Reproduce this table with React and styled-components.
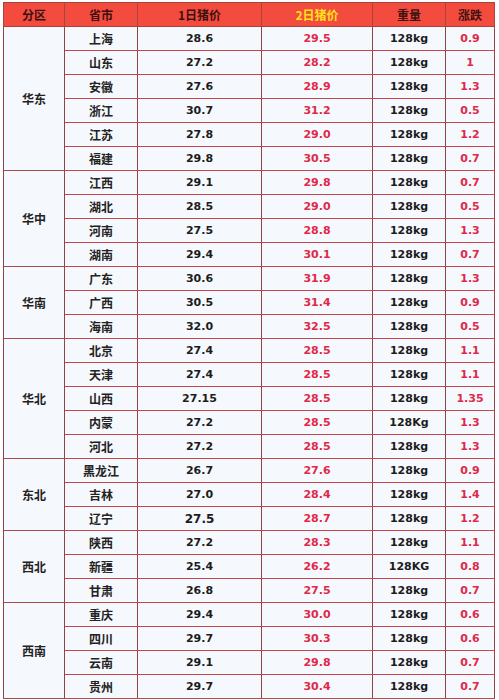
import styled, { createGlobalStyle } from "styled-components";

const GlobalStyle = createGlobalStyle`
  html, body {
    margin: 0;
    padding: 0;
    background: #ffffff;
  }
`;

const regions = [
  {
    name: "华东",
    rows: [
      ["上海", "28.6", "29.5", "128kg", "0.9"],
      ["山东", "27.2", "28.2", "128kg", "1"],
      ["安徽", "27.6", "28.9", "128kg", "1.3"],
      ["浙江", "30.7", "31.2", "128kg", "0.5"],
      ["江苏", "27.8", "29.0", "128kg", "1.2"],
      ["福建", "29.8", "30.5", "128kg", "0.7"],
    ],
  },
  {
    name: "华中",
    rows: [
      ["江西", "29.1", "29.8", "128kg", "0.7"],
      ["湖北", "28.5", "29.0", "128kg", "0.5"],
      ["河南", "27.5", "28.8", "128kg", "1.3"],
      ["湖南", "29.4", "30.1", "128kg", "0.7"],
    ],
  },
  {
    name: "华南",
    rows: [
      ["广东", "30.6", "31.9", "128kg", "1.3"],
      ["广西", "30.5", "31.4", "128kg", "0.9"],
      ["海南", "32.0", "32.5", "128kg", "0.5"],
    ],
  },
  {
    name: "华北",
    rows: [
      ["北京", "27.4", "28.5", "128kg", "1.1"],
      ["天津", "27.4", "28.5", "128kg", "1.1"],
      ["山西", "27.15", "28.5", "128kg", "1.35"],
      ["内蒙", "27.2", "28.5", "128Kg", "1.3"],
      ["河北", "27.2", "28.5", "128kg", "1.3"],
    ],
  },
  {
    name: "东北",
    rows: [
      ["黑龙江", "26.7", "27.6", "128kg", "0.9"],
      ["吉林", "27.0", "28.4", "128kg", "1.4"],
      ["辽宁", "27.5", "28.7", "128kg", "1.2", true],
    ],
  },
  {
    name: "西北",
    rows: [
      ["陕西", "27.2", "28.3", "128kg", "1.1"],
      ["新疆", "25.4", "26.2", "128KG", "0.8"],
      ["甘肃", "26.8", "27.5", "128kg", "0.7"],
    ],
  },
  {
    name: "西南",
    rows: [
      ["重庆", "29.4", "30.0", "128kg", "0.6"],
      ["四川", "29.7", "30.3", "128kg", "0.6"],
      ["云南", "29.1", "29.8", "128kg", "0.7"],
      ["贵州", "29.7", "30.4", "128kg", "0.7"],
    ],
  },
];

function App() {
  return (
    <>
      <GlobalStyle />
      <Page>
        <PriceTable>
          <colgroup>
            <col style={{ width: 61 }} />
            <col style={{ width: 73 }} />
            <col style={{ width: 124 }} />
            <col style={{ width: 111 }} />
            <col style={{ width: 73 }} />
            <col style={{ width: 49 }} />
          </colgroup>
          <thead>
            <tr>
              <HeadCell>分区</HeadCell>
              <HeadCell>省市</HeadCell>
              <HeadCell>1日猪价</HeadCell>
              <HeadCell $highlight>2日猪价</HeadCell>
              <HeadCell>重量</HeadCell>
              <HeadCell>涨跌</HeadCell>
            </tr>
          </thead>
          <tbody>
            {regions.map((region) =>
              region.rows.map((row, i) => (
                <Row key={region.name + row[0]}>
                  {i === 0 && (
                    <RegionCell rowSpan={region.rows.length}>
                      {region.name}
                    </RegionCell>
                  )}
                  <NameCell>{row[0]}</NameCell>
                  <NumCell $big={row[5]}>{row[1]}</NumCell>
                  <NumCell $red>{row[2]}</NumCell>
                  <NumCell>{row[3]}</NumCell>
                  <NumCell $red>{row[4]}</NumCell>
                </Row>
              ))
            )}
          </tbody>
        </PriceTable>
      </Page>
    </>
  );
}

export default App;

const Page = styled.div`
  padding: 2px 4px 0 3px;
`;

const PriceTable = styled.table`
  width: 492px;
  table-layout: fixed;
  border-collapse: collapse;
  background: #f5f8fc;
`;

const HeadCell = styled.th`
  height: 23px;
  padding: 0;
  background: #f34b3e;
  border: 1px solid #a8443c;
  color: ${(p) => (p.$highlight ? "#ffe21a" : "#3d1111")};
  font-family: "Noto Sans CJK SC", "Noto Sans", sans-serif;
  font-size: 12px;
  font-weight: 700;
  text-align: center;
  vertical-align: middle;
`;

const Row = styled.tr`
  height: 24px;
`;

const Cell = styled.td`
  padding: 0;
  border-top: 1px solid #c4474a;
  border-bottom: 1px solid #c4474a;
  border-left: 1px solid #8e4545;
  border-right: 1px solid #8e4545;
  text-align: center;
  vertical-align: middle;
  font-weight: 700;
`;

const RegionCell = styled(Cell)`
  border-top: 1px solid #a84a4a;
  border-bottom: 1px solid #a84a4a;
  color: #222;
  font-family: "Noto Sans CJK SC", sans-serif;
  font-size: 12px;
`;

const NameCell = styled(Cell)`
  color: #222;
  font-family: "Noto Sans CJK SC", sans-serif;
  font-size: 12px;
`;

const NumCell = styled(Cell)`
  color: ${(p) => (p.$red ? "#e0294a" : "#1c1c1c")};
  font-family: "DejaVu Sans", "Noto Sans CJK SC", sans-serif;
  font-size: ${(p) => (p.$big ? "12px" : "11px")};
`;
